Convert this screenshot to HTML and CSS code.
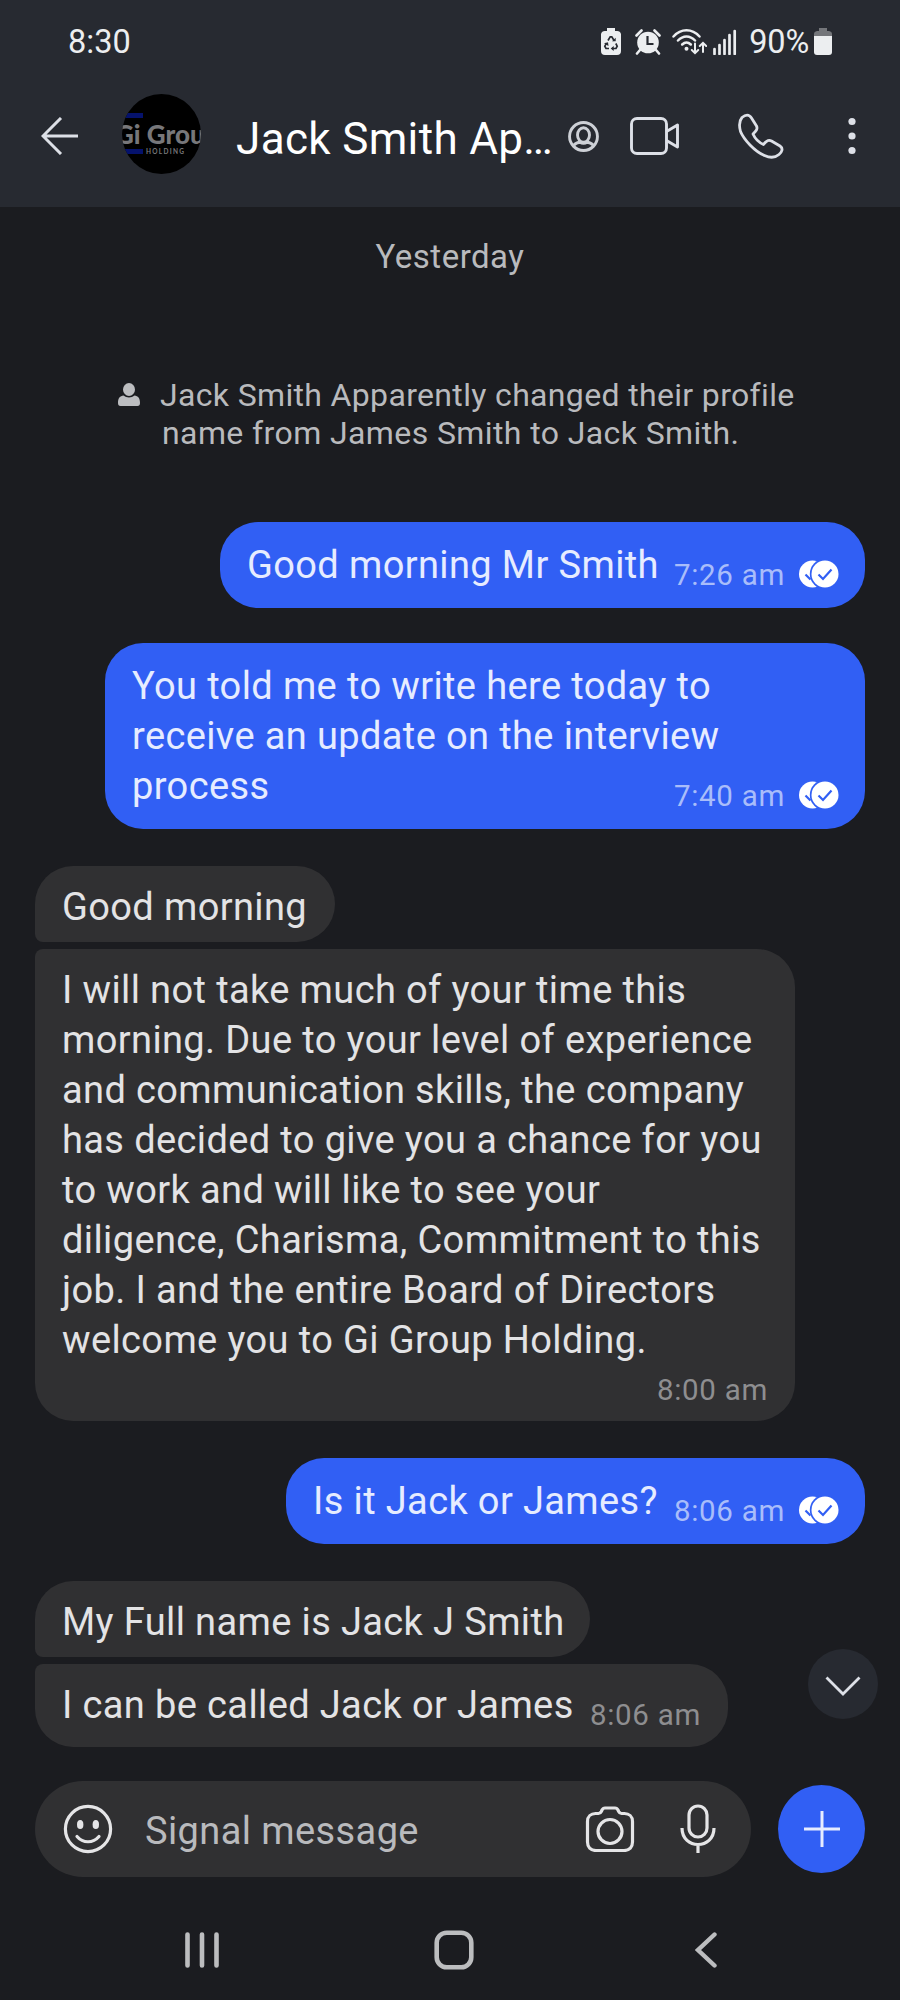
FILE: index.html
```html
<!DOCTYPE html>
<html lang="en">
<head>
<meta charset="utf-8">
<title>Jack Smith Apparently</title>
<link rel="stylesheet" href="styles.css">
</head>
<body>
<svg class="defs" width="0" height="0" aria-hidden="true">
  <symbol id="read" viewBox="0 0 40 28">
    <circle cx="13.5" cy="14" r="13.5" fill="#fff"/>
    <path d="M6.5 14.5l5 5" stroke="#315ff4" stroke-width="2.2" fill="none"/>
    <circle cx="26" cy="14" r="15.2" fill="#315ff4"/>
    <circle cx="26" cy="14" r="13.5" fill="#fff"/>
    <path d="M19.5 14.5l4.5 4.5 8.500-9.500" stroke="#315ff4" stroke-width="2.2" fill="none"/>
  </symbol>
</svg>
<div class="phone">
  <header class="top">
    <div class="status">
      <span class="clock">8:30</span>
      <div class="status-icons">
        <svg width="20" height="28" viewBox="0 0 20 28"><path d="M6 3V0h8v3h2a4 4 0 0 1 4 3v17a4 4 0 0 1-4 4H4a4 4 0 0 1-4-4V6a4 4 0 0 1 4-3z" fill="#eceef0"/><path d="M7 12.500l2.200-3.700h1.600l2.400 4M14.800 15.500l1.400 2.700-1.200 2.300h-4M8 20.500H5L3.800 18.200l1.800-3.200" fill="none" stroke="#272a31" stroke-width="1.700"/><path d="M11 13.200h3.700V9.800zM12.700 18v5l-3-2.500zM3 15.500l4-1.300.5 3.800z" fill="#272a31"/></svg>
        <svg width="26" height="26" viewBox="0 0 26 26"><circle cx="13" cy="13.500" r="10.800" fill="#eceef0"/><path d="M1.500 6.500l5-5M24.500 6.500l-5-5M5 21l-3 3.500M21 21l3 3.500" stroke="#eceef0" stroke-width="2.600" stroke-linecap="round"/><path d="M12.500 7v8h6" fill="none" stroke="#272a31" stroke-width="2.200"/></svg>
        <svg width="35" height="28" viewBox="0 0 35 28"><g fill="none" stroke="#eceef0" stroke-width="2.500" stroke-linecap="round"><path d="M1.500 8.500C9 .2 20 .2 27.500 8.500M6 12.500C11 7 18 7 23 12.500M10.200 16.500c2.800-2.800 5.800-2.800 8.600 0"/><path d="M23 15.500v9.500M19.800 22l3.200 3.200 3.200-3.200M31 24v-9M27.800 18l3.200-3.200 3.200 3.200" stroke-width="2"/></g><circle cx="14.500" cy="20.800" r="2" fill="#eceef0"/></svg>
        <svg width="24" height="26" viewBox="0 0 24 26"><path d="M1.500 20v5M6.500 16v9M11.500 11v14M16.500 6v19M21.700 2v23" stroke="#eceef0" stroke-width="2.700" stroke-linecap="round"/></svg>
        <span class="percent">90%</span>
        <svg width="18" height="28" viewBox="0 0 18 28"><path d="M5 3V0h8v3h2q3 .5 3 3v3H0V6q0-2.500 3-3z" fill="#74767a"/><path d="M0 8h18v16a3 3 0 0 1-3 3H3a3 3 0 0 1-3-3z" fill="#eceef0"/></svg>
      </div>
    </div>
    <div class="titlebar">
      <svg class="back" width="38" height="38" viewBox="0 0 38 38"><path d="M20 1L2 19l18 18M2 19h35" fill="none" stroke="#dde0e7" stroke-width="3"/></svg>
      <div class="avatar"><i class="stripe"></i><b>Gi Grou</b><div class="sub"><i class="stripe"></i><small>HOLDING</small></div></div>
      <h1>Jack Smith Ap…</h1>
      <svg class="contact" width="31" height="31" viewBox="0 0 30 30"><g fill="none" stroke="#cdd0d6" stroke-width="2.800"><circle cx="15" cy="15" r="13.500"/><ellipse cx="15" cy="13.500" rx="5.800" ry="7"/><path d="M5.500 23.500c2-2.300 4-3 6-3 2 1.300 5 1.300 7 0 2 0 4 .7 6 3"/></g></svg>
      <svg class="video" width="50" height="38" viewBox="0 0 50 38"><g fill="none" stroke="#dde0e7" stroke-width="2.900" stroke-linejoin="round"><rect x="1.500" y="1.500" width="35" height="35" rx="5.500"/><path d="M36.500 14.500L47.500 8v22l-11-6.500"/></g></svg>
      <svg class="call" width="46" height="46" viewBox="0 0 46 46"><path d="M4 4.500C7.500 1.500 11 1 13.500 5l5 8c1.500 3-.5 5-3.500 8 2 4.500 6 8.500 10.500 10.500 3-4 5-5 8-3.500l8.500 5c3.500 2.500 2 6-1 8.500-4 3.500-9 3.500-14.500 1C17 38.500 6 27 2.500 18.500 1 13 1 8 4 4.500z" fill="none" stroke="#dde0e7" stroke-width="2.800" stroke-linejoin="round"/></svg>
      <svg class="more" width="8" height="38" viewBox="0 0 8 38"><g fill="#dde0e7"><circle cx="4" cy="4.500" r="3.600"/><circle cx="4" cy="19" r="3.600"/><circle cx="4" cy="33.500" r="3.600"/></g></svg>
    </div>
  </header>

  <main class="chat">
    <div class="date">Yesterday</div>
    <div class="notice"><div class="line first"><svg width="24" height="24" viewBox="0 0 24 24"><ellipse cx="12" cy="6.500" rx="6" ry="6.500" fill="#bcbdc0"/><path d="M1 20c0-5 2-7 5.500-7.500 3 2.500 8 2.500 11 0C21 13 23 15 23 20c0 2-.8 3-2.500 3h-17C1.800 23 1 22 1 20z" fill="#bcbdc0"/></svg><span>Jack Smith Apparently changed their profile</span></div><div class="line second">name from James Smith to Jack Smith.</div></div>

    <div class="msg out one-line m1"><p>Good morning Mr Smith</p><div class="meta"><time>7:26 am</time><svg width="40" height="28"><use href="#read"/></svg></div></div>
    <div class="msg out m2"><p>You told me to write here today to<br>receive an update on the interview<br>process</p><div class="meta overlap"><time>7:40 am</time><svg width="40" height="28"><use href="#read"/></svg></div></div>
    <div class="msg in start m3"><p>Good morning</p></div>
    <div class="msg in end m4"><p>I will not take much of your time this<br>morning. Due to your level of experience<br>and communication skills, the company<br>has decided to give you a chance for you<br>to work and will like to see your<br>diligence, Charisma, Commitment to this<br>job. I and the entire Board of Directors<br>welcome you to Gi Group Holding.</p><div class="meta"><time>8:00 am</time></div></div>
    <div class="msg out one-line m5"><p>Is it Jack or James?</p><div class="meta"><time>8:06 am</time><svg width="40" height="28"><use href="#read"/></svg></div></div>
    <div class="msg in start m6"><p>My Full name is Jack J Smith</p></div>
    <div class="msg in end one-line m7"><p>I can be called Jack or James</p><div class="meta"><time>8:06 am</time></div></div>
    <div class="scroll-down"><svg width="36" height="20" viewBox="0 0 36 20"><path d="M1.500 1.500L18 18 34.500 1.500" fill="none" stroke="#dde0e7" stroke-width="2.800"/></svg></div>
  </main>

  <footer class="composer">
    <div class="field">
      <svg width="50" height="50" viewBox="0 0 50 50"><circle cx="25" cy="25" r="22.600" fill="none" stroke="#e5e5e7" stroke-width="3.200"/><ellipse cx="17.200" cy="20.500" rx="3.200" ry="4.600" fill="#e5e5e7"/><ellipse cx="32.800" cy="20.500" rx="3.200" ry="4.600" fill="#e5e5e7"/><path d="M14 32.500c6 7 16 7 22 0" fill="none" stroke="#e5e5e7" stroke-width="3.200" stroke-linecap="round"/></svg>
      <span class="placeholder">Signal message</span>
      <svg class="camera" width="50" height="46" viewBox="0 0 50 46"><g fill="none" stroke="#e5e5e7" stroke-width="3.200" stroke-linejoin="round"><path d="M10.500 7.500h3c1.500 0 2.200-.8 2.800-2l.7-1.500c.7-1.500 1.300-2 3-2h10c1.700 0 2.300.5 3 2l.7 1.500c.6 1.200 1.300 2 2.800 2h3c4.500 0 8 3 8 8V36c0 5-3 8.500-8.500 8.500H11c-5.500 0-8.500-3.500-8.500-8.500V15.500c0-5 3.500-8 8-8z"/><circle cx="25" cy="25.500" r="12"/></g></svg>
      <svg class="mic" width="36" height="50" viewBox="0 0 36 50"><g fill="none" stroke="#e5e5e7" stroke-width="3.200"><rect x="9" y="2" width="18" height="31" rx="9"/><path d="M2 24c0 22 32 22 32 0M18 40.500V49"/></g></svg>
    </div>
    <div class="plus"><svg width="36" height="36" viewBox="0 0 36 36"><path d="M18 0v36M0 18h36" stroke="#e6ecff" stroke-width="3"/></svg></div>
  </footer>

  <nav class="nav">
    <svg width="36" height="40" viewBox="0 0 36 40"><path d="M3.500 4.500v31M18 4.500v31M32.500 4.500v31" stroke="#bcbdbf" stroke-width="4.600" stroke-linecap="round"/></svg>
    <svg width="40" height="40" viewBox="0 0 40 40"><rect x="2.700" y="2.700" width="34.600" height="34.600" rx="10" fill="none" stroke="#bcbdbf" stroke-width="4.600"/></svg>
    <svg width="22" height="40" viewBox="0 0 22 40"><path d="M19.500 4.500L3 20l16.500 15.500" fill="none" stroke="#bcbdbf" stroke-width="4.400" stroke-linecap="round"/></svg>
  </nav>
</div>
</body>
</html>
```
FILE: styles.css
```css
* { box-sizing: border-box; }
body { margin: 0; background: #1b1c20; font-family: Roboto, "Liberation Sans", sans-serif; }
p, h1 { margin: 0; font-weight: 400; }
svg { display: block; flex: none; }
.defs { position: absolute; }
.phone { width: 900px; height: 2000px; overflow: hidden; display: flex; flex-direction: column; white-space: nowrap; }

.top { height: 207px; background: #272a31; flex: none; }
.status { height: 83px; padding: 0 68px 0 68px; display: flex; justify-content: space-between; align-items: center; font-size: 32.5px; line-height: 38px; color: #eceef0; }
.status-icons { display: flex; align-items: center; }
.status-icons svg:nth-child(2) { margin-left: 14px; }
.status-icons svg:nth-child(3) { margin-left: 11px; }
.status-icons svg:nth-child(4) { margin-left: 6px; }
.percent { margin: 0 5px 0 12px; letter-spacing: -0.2px; }
.titlebar { display: flex; align-items: center; height: 106px; padding-left: 41px; }
.avatar { width: 79px; height: 80px; margin: -5px 0 0 43px; border-radius: 50%; overflow: hidden; background: #000; padding-top: 19px; flex: none; }
.stripe { display: block; width: 21px; height: 5px; background: #05126c; }
.avatar b { display: block; margin: 3px 0 2px -7px; font: 900 26px/26px Lato, sans-serif; color: #77777a; }
.sub { display: flex; align-items: center; gap: 3px; margin-top: 1px; }
.sub small { font: 700 6.5px/6px Lato, sans-serif; letter-spacing: 1.3px; color: #77777a; }
h1 { margin: 5px 0 0 35px; width: 331px; font-size: 44px; line-height: 50px; letter-spacing: 0.35px; color: #fff; }
.contact { margin: 1px 0 0 1px; }
.video { margin: -1px 0 0 31px; }
.call { margin: 0 0 0 58px; }
.more { margin-left: 64px; }

.chat { height: 1574px; flex: none; position: relative; display: flex; flex-direction: column; align-items: flex-start; padding: 0 35px; }
.date { align-self: center; margin-top: 31px; height: 38px; font-size: 33px; line-height: 38px; letter-spacing: 0.5px; color: #b9babd; }
.notice { align-self: stretch; margin: 100px 0 0; height: 76px; font-size: 32px; line-height: 38px; letter-spacing: 0.34px; color: #b9babd; }
.line { display: flex; align-items: center; }
.first { margin-left: 82px; gap: 19px; }
.second { margin-left: 127px; letter-spacing: 0.4px; }

.msg { padding: 16px 27px 0; font-size: 38px; line-height: 50px; letter-spacing: 0.38px; border-radius: 38px; display: flex; flex-direction: column; flex: none; }
.out { align-self: flex-end; background: #315ff4; color: #e6ecff; padding-top: 18px; }
.in { background: #303032; color: #e3e3e5; }
.start { border-bottom-left-radius: 8px; }
.end { border-top-left-radius: 8px; }
.one-line { flex-direction: row; justify-content: space-between; }
.meta { display: flex; align-items: center; align-self: flex-end; gap: 14px; font-size: 29.5px; line-height: 34px; height: 34px; letter-spacing: 0.7px; color: #a9bdfa; }
.out .meta { margin-right: -1px; }
.in .meta { color: #8e8e90; }
.one-line .meta { align-self: flex-start; margin-top: 18px; }
.meta svg { margin-top: -2px; }
.out .overlap { margin-top: -32px; }
.m1 { width: 645px; height: 86px; margin-top: 70px; }
.m2 { width: 760px; height: 186px; margin-top: 35px; }
.m3 { width: 300px; height: 76px; margin-top: 37px; }
.m4 { width: 760px; height: 472px; margin-top: 7px; }
.m4 .meta { margin-top: 8px; }
.m5 { width: 579px; height: 86px; margin-top: 37px; }
.m6 { width: 555px; height: 76px; margin-top: 37px; }
.m7 { width: 693px; height: 83px; margin-top: 7px; }
.scroll-down { position: absolute; right: 22px; top: 1442px; width: 70px; height: 70px; border-radius: 50%; background: #272a31; display: grid; place-items: center; padding-top: 4px; }

.composer { flex: none; height: 96px; padding-left: 35px; display: flex; align-items: center; gap: 27px; }
.field { width: 716px; height: 96px; border-radius: 48px; background: #303032; display: flex; align-items: center; padding: 0 35px 0 28px; }
.placeholder { margin: 4px auto 0 32px; font-size: 38px; line-height: 50px; letter-spacing: 0.4px; color: #b9babd; }
.camera { margin-right: 45px; }
.plus { width: 87px; height: 88px; border-radius: 50%; background: #315ff4; display: grid; place-items: center; }

.nav { flex: 1; display: flex; padding: 53px 183px 0 184px; justify-content: space-between; align-items: flex-start; }
.nav svg:nth-child(2) { margin-right: 7px; }
```
